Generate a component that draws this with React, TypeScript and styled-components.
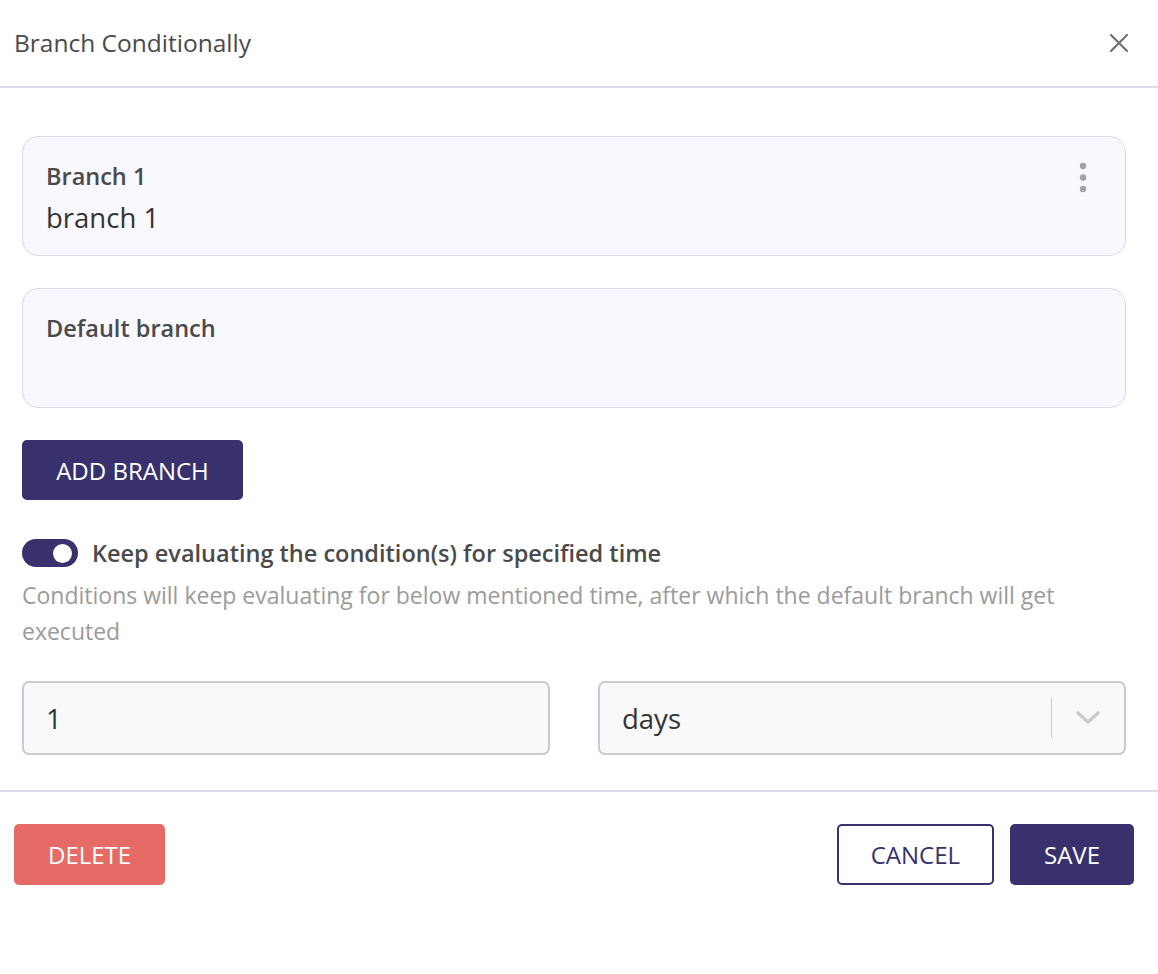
import React from "react";
import styled, { createGlobalStyle } from "styled-components";

const GlobalStyle = createGlobalStyle`
  html, body { margin: 0; padding: 0; background: #ffffff; }
  body { font-family: "Open Sans", "Noto Sans", sans-serif; color: #4a4a4a; }
  * { box-sizing: border-box; }
`;

const Dialog = styled.div`
  width: 1158px;
  background: #fff;
  display: flex;
  flex-direction: column;
`;

const Header = styled.header`
  height: 88px;
  border-bottom: 2px solid #dddcee;
  display: flex;
  align-items: center;
  justify-content: space-between;
  padding: 0 28px 0 14px;
`;

const Title = styled.h1`
  margin: 0;
  font-size: 24.5px;
  font-weight: 500;
  color: #4a4a4a;
  line-height: 30px;
`;

const CloseButton = styled.button`
  border: none;
  background: none;
  padding: 0;
  width: 22px;
  height: 22px;
  display: flex;
  align-items: center;
  justify-content: center;
  cursor: pointer;
`;

const Body = styled.div`
  padding: 48px 32px 35px 22px;
  display: flex;
  flex-direction: column;
  border-bottom: 2px solid #dddcee;
`;

const BranchCard = styled.div`
  position: relative;
  height: 120px;
  background: #f9f8fe;
  border: 1px solid #dcdaf0;
  border-radius: 16px;
  padding: 25px 24px 16px 23px;
  margin-bottom: 32px;
`;

const BranchLabel = styled.div`
  font-size: 23.5px;
  font-weight: 600;
  line-height: 28px;
  color: #4a4a4a;
`;

const BranchValue = styled.div`
  font-size: 27.5px;
  font-weight: 400;
  line-height: 32px;
  margin-top: 12px;
  color: #333;
`;

const MenuButton = styled.button`
  position: absolute;
  top: 24px;
  right: 36px;
  border: none;
  background: none;
  padding: 0;
  width: 12px;
  height: 34px;
  cursor: pointer;
`;

const PrimaryButton = styled.button<{ $outline?: boolean; $danger?: boolean }>`
  height: 61px;
  padding: 0 32px;
  border-radius: 5px;
  font-family: "Open Sans", sans-serif;
  font-size: 24px;
  font-weight: 400;
  cursor: pointer;
  border: 2px solid ${(p) => (p.$danger ? "#e66b67" : "#38316d")};
  background: ${(p) => (p.$outline ? "#fff" : p.$danger ? "#e66b67" : "#38316d")};
  color: ${(p) => (p.$outline ? "#38316d" : "#fff")};
`;

const AddButton = styled(PrimaryButton)`
  align-self: flex-start;
  height: 60px;
  width: 221px;
  padding: 0;
`;

const ToggleRow = styled.div`
  display: flex;
  align-items: center;
  gap: 14px;
  margin-top: 38px;
`;

const Track = styled.div<{ $on: boolean }>`
  width: 56px;
  height: 28px;
  border-radius: 14px;
  background: ${(p) => (p.$on ? "#38316d" : "#ccc")};
  display: flex;
  align-items: center;
  justify-content: ${(p) => (p.$on ? "flex-end" : "flex-start")};
  padding: 0 6px;
`;

const Knob = styled.div`
  width: 19px;
  height: 19px;
  border-radius: 50%;
  background: #fff;
`;

const ToggleLabel = styled.span`
  font-size: 23.5px;
  font-weight: 600;
  line-height: 30px;
  color: #4a4a4a;
`;

const HelpText = styled.p`
  margin: 9px 0 0 0;
  font-size: 23px;
  line-height: 36px;
  color: #9b9b9b;
  max-width: 1080px;
`;

const FieldRow = styled.div`
  display: grid;
  grid-template-columns: 528px 528px;
  gap: 48px;
  margin-top: 32px;
`;

const Field = styled.div`
  height: 74px;
  border: 2px solid #c9cad3;
  border-radius: 7px;
  background: #f9f9f9;
  display: flex;
  align-items: center;
  font-size: 27.5px;
  color: #333;
`;

const FieldText = styled.span`
  flex: 1;
  padding-left: 22px;
`;

const Indicator = styled.div`
  display: flex;
  align-items: center;
  height: 100%;
`;

const Separator = styled.span`
  width: 1px;
  height: 40px;
  background: #cccccc;
`;

const ChevronBox = styled.span`
  width: 72px;
  display: flex;
  justify-content: center;
  align-items: center;
`;

const Footer = styled.footer`
  display: flex;
  align-items: center;
  padding: 32px 24px 0 14px;
  gap: 16px;
`;

const Spacer = styled.div`
  flex: 1;
`;

export default function App() {
  return (
    <>
      <GlobalStyle />
      <Dialog>
        <Header>
          <Title>Branch Conditionally</Title>
          <CloseButton aria-label="close">
            <svg width="18" height="18" viewBox="0 0 18 18">
              <path d="M1 1 L17 17 M17 1 L1 17" stroke="#717171" strokeWidth="2.2" strokeLinecap="round" />
            </svg>
          </CloseButton>
        </Header>
        <Body>
          <BranchCard>
            <BranchLabel>Branch 1</BranchLabel>
            <BranchValue>branch 1</BranchValue>
            <MenuButton aria-label="menu">
              <svg width="12" height="34" viewBox="0 0 12 34">
                <circle cx="6" cy="5" r="3.2" fill="#a0a3ad" />
                <circle cx="6" cy="16.5" r="3.2" fill="#a0a3ad" />
                <circle cx="6" cy="28" r="3.2" fill="#a0a3ad" />
              </svg>
            </MenuButton>
          </BranchCard>
          <BranchCard>
            <BranchLabel>Default branch</BranchLabel>
          </BranchCard>
          <AddButton>ADD BRANCH</AddButton>
          <ToggleRow>
            <Track $on>
              <Knob />
            </Track>
            <ToggleLabel>Keep evaluating the condition(s) for specified time</ToggleLabel>
          </ToggleRow>
          <HelpText>
            Conditions will keep evaluating for below mentioned time, after which the default branch will get executed
          </HelpText>
          <FieldRow>
            <Field>
              <FieldText>1</FieldText>
            </Field>
            <Field>
              <FieldText>days</FieldText>
              <Indicator>
                <Separator />
                <ChevronBox>
                  <svg width="26" height="16" viewBox="0 0 26 16">
                    <path d="M3 3 L13 12 L23 3" stroke="#cccccc" strokeWidth="3.5" fill="none" strokeLinecap="round" strokeLinejoin="round" />
                  </svg>
                </ChevronBox>
              </Indicator>
            </Field>
          </FieldRow>
        </Body>
        <Footer>
          <PrimaryButton $danger>DELETE</PrimaryButton>
          <Spacer />
          <PrimaryButton $outline>CANCEL</PrimaryButton>
          <PrimaryButton>SAVE</PrimaryButton>
        </Footer>
      </Dialog>
    </>
  );
}
